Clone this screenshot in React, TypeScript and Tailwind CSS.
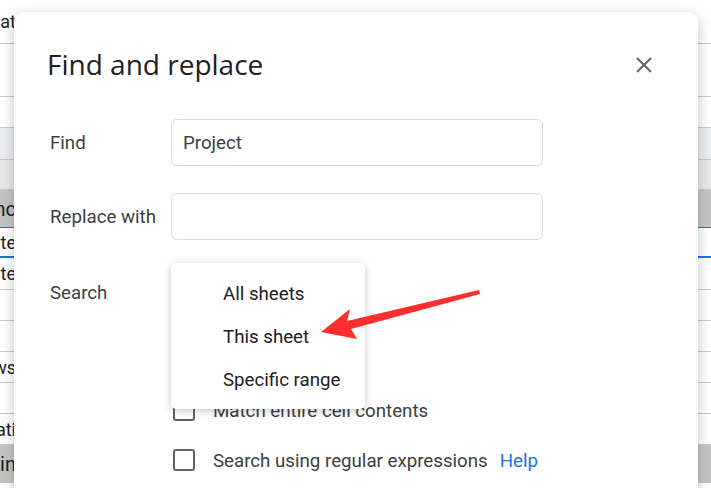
import React from 'react';

const rows = [
  { h: 'h-[44px]', text: 'Dat', cls: 'bg-white border-b-[#c8c8c8]' },
  { h: 'h-[53px]', text: '', cls: 'bg-white border-b-[#c8c8c8]' },
  { h: 'h-[31px]', text: '', cls: 'bg-white border-b-[#c8c8c8]' },
  { h: 'h-[32px]', text: '', cls: 'bg-[#eceef1] border-b-[#c8c8c8]' },
  { h: 'h-[30px]', text: '', cls: 'bg-[#e9e9e9] border-b-[#c8c8c8]' },
  { h: 'h-[38px]', text: 'Ranc', cls: 'bg-[#c4c4c4] text-[20px] border-b-[#1a73e8]' },
  { h: 'h-[30px]', text: 'Sorte', cls: 'bg-white border-b-2 border-b-[#1a73e8]' },
  { h: 'h-[32px]', text: 'Sorte', cls: 'bg-white border-b-[#c8c8c8]' },
  { h: 'h-[31px]', text: '', cls: 'bg-white border-b-[#c8c8c8]' },
  { h: 'h-[31px]', text: '', cls: 'bg-white border-b-[#c8c8c8]' },
  { h: 'h-[31px]', text: 'Rows', cls: 'bg-white border-b-[#c8c8c8]' },
  { h: 'h-[31px]', text: '', cls: 'bg-white border-b-[#c8c8c8]' },
  { h: 'h-[31px]', text: 'Relati', cls: 'bg-white border-b-[#c8c8c8]' },
  { h: 'h-[38px]', text: 'Fin', cls: 'bg-[#c4c4c4] text-[20px] border-b-[#c8c8c8]' },
];

function SheetBackground() {
  return (
    <div className="flex flex-col w-full">
      {rows.map((r, i) => (
        <div
          key={i}
          className={`${r.h} ${r.cls} flex items-center border-b w-full text-[18px] text-[#202124]`}
        >
          <div className="w-[16px] overflow-hidden flex justify-end whitespace-nowrap">
            <span>{r.text}</span>
          </div>
        </div>
      ))}
    </div>
  );
}

function CheckBox() {
  return <div className="w-[22px] h-[22px] rounded-[3px] border-2 border-[#5f6368] bg-white shrink-0" />;
}

export default function App() {
  return (
    <div
      className="relative w-[711px] h-[488px] overflow-hidden bg-white"
      style={{ fontFamily: 'Roboto, "Liberation Sans", sans-serif' }}
    >
      <SheetBackground />

      {/* dialog */}
      <div className="absolute left-[14px] top-[12px] w-[684px] h-[520px] bg-white rounded-[9px] shadow-[0_4px_14px_rgba(0,0,0,0.22)] pt-[34px] pl-[33px] pr-[46px] flex flex-col">
        <div className="flex items-center justify-between h-[36px]">
          <h1
            className="text-[28px] leading-9 text-[#202124]"
            style={{ fontFamily: '"Open Sans", Roboto, sans-serif' }}
          >
            Find and replace
          </h1>
          <svg width="16" height="16" viewBox="0 0 16 16" className="mt-[2px]">
            <path d="M1 1L15 15M15 1L1 15" stroke="#5f6368" strokeWidth="2" />
          </svg>
        </div>

        <div className="mt-[37px] flex items-center h-[47px] pl-[3px] pt-[2px]">
          <span className="w-[121px] text-[18.7px] text-[#3c4043]">Find</span>
          <div className="w-[372px] h-[47px] -mt-[2px] rounded-[6px] border border-[#dadce0] flex items-center px-[11px] pt-[2px] text-[18.7px] text-[#3c4043]">
            Project
          </div>
        </div>

        <div className="mt-[27px] flex items-center h-[47px] pl-[3px] pt-[2px]">
          <span className="w-[121px] text-[18.7px] text-[#3c4043]">Replace with</span>
          <div className="w-[372px] h-[47px] -mt-[2px] rounded-[6px] border border-[#dadce0]" />
        </div>

        <div className="mt-[29px] flex items-center h-[47px] pl-[3px] pt-[2px]">
          <span className="w-[121px] text-[18.7px] text-[#3c4043]">Search</span>
        </div>

        <div className="mt-[82px] flex items-center gap-[18px] h-[24px] pl-[126px]">
          <CheckBox />
          <span className="text-[18.7px] text-[#3c4043] pt-[2px]">Match entire cell contents</span>
        </div>

        <div className="mt-[26px] flex items-center gap-[18px] h-[24px] pl-[126px]">
          <CheckBox />
          <span className="text-[18.7px] text-[#3c4043] pt-[2px]">Search using regular expressions</span>
          <span className="text-[18.7px] text-[#1a73e8] -ml-[6px] pt-[2px]">Help</span>
        </div>
      </div>

      {/* dropdown menu */}
      <div className="absolute left-[171px] top-[263px] w-[194px] h-[146px] bg-white rounded-[5px] shadow-[0_2px_8px_rgba(0,0,0,0.22)] pt-[9px] pb-[5px] flex flex-col text-[18.7px] text-[#202124]">
        <div className="h-[44px] flex items-center pl-[52px]">All sheets</div>
        <div className="h-[43px] flex items-center pl-[52px]">This sheet</div>
        <div className="h-[43px] flex items-center pl-[52px]">Specific range</div>
      </div>

      {/* annotation arrow */}
      <svg className="absolute left-0 top-0" width="711" height="488" viewBox="0 0 711 488">
        <polygon
          points="321,332 350,309 347,321 479,290 480,294 351,329 357,339"
          fill="#ff2d2d"
        />
      </svg>
    </div>
  );
}
